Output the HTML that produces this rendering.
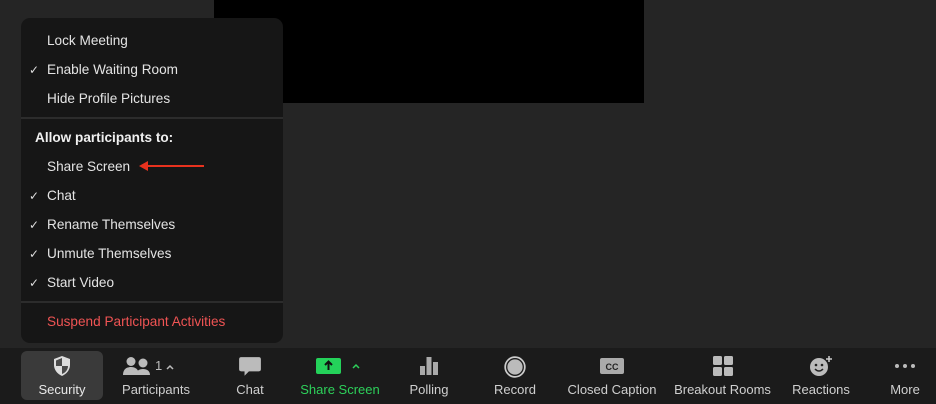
<!DOCTYPE html>
<html><head><style>
body{margin:0;width:936px;height:404px;background:#252525;position:relative;overflow:hidden;font-family:"Liberation Sans",sans-serif;}
.blk{position:absolute;left:214px;top:0;width:430px;height:103px;background:#000;}
.menu{position:absolute;left:21px;top:18px;width:262px;height:325px;background:#161616;border-radius:9px;}
.it{position:absolute;left:26px;font-size:13.6px;color:#e4e4e4;line-height:16px;}
.ck{position:absolute;left:8px;font-size:12px;color:#ddd;line-height:16px;}
.sep{position:absolute;left:0;width:262px;height:2px;background:#2c2c2c;}
.bar{position:absolute;left:0;top:348px;width:936px;height:56px;background:#1b1b1b;}
.btn{position:absolute;top:0;height:56px;text-align:center;font-size:13px;color:#cfcfcf;}
.btn span{position:absolute;left:-10px;right:-10px;top:34px;}
.btn svg{position:absolute;left:50%;top:7px;transform:translateX(-50%);}
</style></head><body>
<div class="blk"></div>
<div class="menu">
<div class="it" style="top:15px">Lock Meeting</div>
<div class="ck" style="top:44px">✓</div><div class="it" style="top:44px">Enable Waiting Room</div>
<div class="it" style="top:73px">Hide Profile Pictures</div>
<div class="sep" style="top:99px"></div>
<div class="it" style="top:112px;left:14px;font-weight:bold;color:#f0f0f0">Allow participants to:</div>
<div class="it" style="top:141px">Share Screen</div>
<svg style="position:absolute;left:117px;top:141px" width="68" height="14"><path d="M8 7H66" stroke="#e8321e" stroke-width="2"/><path d="M1 7L10 2V12Z" fill="#e8321e"/></svg>
<div class="ck" style="top:170px">✓</div><div class="it" style="top:170px">Chat</div>
<div class="ck" style="top:199px">✓</div><div class="it" style="top:199px">Rename Themselves</div>
<div class="ck" style="top:228px">✓</div><div class="it" style="top:228px">Unmute Themselves</div>
<div class="ck" style="top:257px">✓</div><div class="it" style="top:257px">Start Video</div>
<div class="sep" style="top:283px"></div>
<div class="it" style="top:296px;color:#f05454">Suspend Participant Activities</div>
</div>
<div class="bar">
<div style="position:absolute;left:21px;top:3px;width:82px;height:49px;background:#3a3a3a;border-radius:6px"></div>
<div class="btn" style="left:21px;width:82px;color:#e8e8e8"><svg width="20" height="22" viewBox="0 0 20 22"><path d="M10 1L18 4V10C18 15 14.5 19 10 21C5.5 19 2 15 2 10V4Z" fill="#ddd"/><path d="M10 3V11H16C16 15 13 18 10 19V11H4V5.5L10 3Z" fill="#3a3a3a" opacity=".9"/></svg><span>Security</span></div>
<div class="btn" style="left:112px;width:88px"><svg width="62" height="22" viewBox="0 0 62 22" style="left:47%"><circle cx="9" cy="6.5" r="4.5" fill="#bbb"/><circle cx="21" cy="8" r="4.5" fill="#bbb"/><path d="M1 20C1 14 5 12 9 12C13 12 17 14 17 20Z" fill="#bbb"/><path d="M14 20C14 16 17 14 21 14C25 14 28 16 28 20Z" fill="#bbb"/><text x="33" y="15" fill="#bbb" font-size="13" font-family="Liberation Sans">1</text><path d="M45 14L48 11L51 14" stroke="#bbb" fill="none" stroke-width="1.5"/></svg><span>Participants</span></div>
<div class="btn" style="left:225px;width:50px"><svg width="24" height="24" viewBox="0 0 22 22"><path d="M3 2H19Q21 2 21 4V13Q21 15 19 15H10L6 19V15H3Q1 15 1 13V4Q1 2 3 2Z" fill="#bbb"/></svg><span>Chat</span></div>
<div class="btn" style="left:295px;width:90px;color:#2dd05a"><svg width="60" height="22" viewBox="0 0 60 22"><rect x="6" y="3" width="25" height="16" rx="2" fill="#24d25a"/><path d="M18.5 15V7M15 10L18.5 6.5L22 10" stroke="#111" stroke-width="2" fill="none"/><path d="M43 13L46 10L49 13" stroke="#2dd05a" fill="none" stroke-width="1.5"/></svg><span>Share Screen</span></div>
<div class="btn" style="left:400px;width:58px"><svg width="22" height="22" viewBox="0 0 22 22"><rect x="2" y="11" width="5" height="9" fill="#aaa"/><rect x="8.5" y="2" width="5" height="18" fill="#aaa"/><rect x="15" y="7" width="5" height="13" fill="#aaa"/></svg><span>Polling</span></div>
<div class="btn" style="left:485px;width:60px"><svg width="24" height="24" viewBox="0 0 22 22"><circle cx="11" cy="11" r="9" fill="none" stroke="#ccc" stroke-width="1.6"/><circle cx="11" cy="11" r="7" fill="#bbb"/></svg><span>Record</span></div>
<div class="btn" style="left:562px;width:100px"><svg width="26" height="22" viewBox="0 0 26 22"><rect x="1" y="3" width="24" height="16" rx="2" fill="#aaa"/><text x="13" y="15" text-anchor="middle" fill="#222" font-size="9" font-weight="bold" font-family="Liberation Sans">CC</text></svg><span>Closed Caption</span></div>
<div class="btn" style="left:670px;width:105px"><svg width="22" height="22" viewBox="0 0 22 22"><rect x="1" y="1" width="9" height="9" rx="1.5" fill="#bbb"/><rect x="12" y="1" width="9" height="9" rx="1.5" fill="#bbb"/><rect x="1" y="12" width="9" height="9" rx="1.5" fill="#bbb"/><rect x="12" y="12" width="9" height="9" rx="1.5" fill="#bbb"/></svg><span>Breakout Rooms</span></div>
<div class="btn" style="left:788px;width:66px"><svg width="24" height="22" viewBox="0 0 24 22"><circle cx="10" cy="12" r="9" fill="#bbb"/><circle cx="7" cy="10" r="1.3" fill="#222"/><circle cx="13" cy="10" r="1.3" fill="#222"/><path d="M6 14Q10 18 14 14" stroke="#222" fill="none" stroke-width="1.5"/><path d="M20 1V7M17 4H23" stroke="#ccc" stroke-width="1.5"/></svg><span>Reactions</span></div>
<div class="btn" style="left:880px;width:50px"><svg width="24" height="22" viewBox="0 0 24 22"><circle cx="4" cy="11" r="2" fill="#bbb"/><circle cx="12" cy="11" r="2" fill="#bbb"/><circle cx="20" cy="11" r="2" fill="#bbb"/></svg><span>More</span></div>
</div>
</body></html>
